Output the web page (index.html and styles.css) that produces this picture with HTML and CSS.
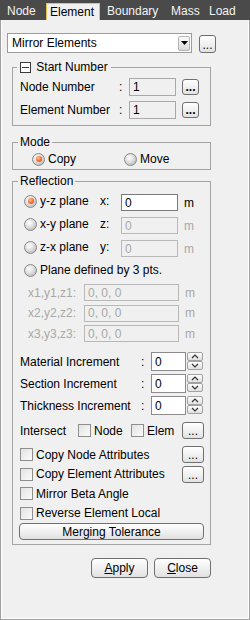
FILE: index.html
```html
<!DOCTYPE html>
<html>
<head>
<meta charset="utf-8">
<link rel="stylesheet" href="styles.css">
</head>
<body>
<div class="tabs">
  <div class="tab tab-node">Node</div>
  <div class="tab tab-element active">Element</div>
  <div class="tab tab-boundary">Boundary</div>
  <div class="tab tab-mass">Mass</div>
  <div class="tab tab-load">Load</div>
</div>
<div class="panel">
  <div class="toprow">
    <div class="combo">
      <span class="combo-text">Mirror Elements</span>
      <span class="combo-btn"><svg width="7" height="4" viewBox="0 0 7 4"><polygon points="0,0 7,0 3.5,4" fill="#000"/></svg></span>
    </div>
    <button class="dots dots-top">...</button>
  </div>

  <fieldset class="grp grp-start">
    <legend class="lg-start"><svg class="minus" width="11" height="11" viewBox="0 0 11 11"><rect x="0.5" y="0.5" width="10" height="10" fill="#fff" stroke="#3a3a3a"/><line x1="2" y1="5.5" x2="9" y2="5.5" stroke="#3a3a3a"/></svg> Start Number</legend>
    <div class="srow">
      <span class="slabel">Node Number</span><span class="colon">:</span>
      <input class="field field-ro" value="1" readonly>
      <button class="dots dots-s">...</button>
    </div>
    <div class="srow">
      <span class="slabel">Element Number</span><span class="colon">:</span>
      <input class="field field-ro" value="1" readonly>
      <button class="dots dots-s">...</button>
    </div>
  </fieldset>

  <fieldset class="grp grp-mode">
    <legend class="lg">Mode</legend>
    <div class="mrow">
      <span class="opt opt-copy"><span class="radio on"></span>Copy</span>
      <span class="opt"><span class="radio"></span>Move</span>
    </div>
  </fieldset>

  <fieldset class="grp grp-refl">
    <legend class="lg">Reflection</legend>
    <div class="prow prow-first">
      <span class="plabel"><span class="radio on"></span><span class="pname">y-z plane</span><span class="axis">x:</span></span>
      <input class="field field-coord" value="0">
      <span class="unit">m</span>
    </div>
    <div class="prow">
      <span class="plabel"><span class="radio"></span><span class="pname">x-y plane</span><span class="axis">z:</span></span>
      <input class="field field-coord field-dis" value="0" disabled>
      <span class="unit unit-dis">m</span>
    </div>
    <div class="prow">
      <span class="plabel"><span class="radio"></span><span class="pname">z-x plane</span><span class="axis">y:</span></span>
      <input class="field field-coord field-dis" value="0" disabled>
      <span class="unit unit-dis">m</span>
    </div>
    <div class="prow prow-3pts">
      <span class="plabel"><span class="radio"></span>Plane defined by 3 pts.</span>
    </div>
    <div class="xrow xrow-first">
      <span class="xlabel">x1,y1,z1:</span>
      <input class="field field-pt field-dis" value="0, 0, 0" disabled>
      <span class="unit unit-dis">m</span>
    </div>
    <div class="xrow">
      <span class="xlabel">x2,y2,z2:</span>
      <input class="field field-pt field-dis" value="0, 0, 0" disabled>
      <span class="unit unit-dis">m</span>
    </div>
    <div class="xrow">
      <span class="xlabel">x3,y3,z3:</span>
      <input class="field field-pt field-dis" value="0, 0, 0" disabled>
      <span class="unit unit-dis">m</span>
    </div>

    <div class="irow irow-first">
      <span class="ilabel">Material Increment</span><span class="colon">:</span>
      <input class="field field-inc" value="0">
      <span class="spin">
        <span class="sbtn"><svg width="8" height="5" viewBox="0 0 8 5"><polyline points="1,4 4,1 7,4" fill="none" stroke="#333" stroke-width="1.2"/></svg></span>
        <span class="sbtn"><svg width="8" height="5" viewBox="0 0 8 5"><polyline points="1,1 4,4 7,1" fill="none" stroke="#333" stroke-width="1.2"/></svg></span>
      </span>
    </div>
    <div class="irow">
      <span class="ilabel">Section Increment</span><span class="colon">:</span>
      <input class="field field-inc" value="0">
      <span class="spin">
        <span class="sbtn"><svg width="8" height="5" viewBox="0 0 8 5"><polyline points="1,4 4,1 7,4" fill="none" stroke="#333" stroke-width="1.2"/></svg></span>
        <span class="sbtn"><svg width="8" height="5" viewBox="0 0 8 5"><polyline points="1,1 4,4 7,1" fill="none" stroke="#333" stroke-width="1.2"/></svg></span>
      </span>
    </div>
    <div class="irow">
      <span class="ilabel">Thickness Increment</span><span class="colon">:</span>
      <input class="field field-inc" value="0">
      <span class="spin">
        <span class="sbtn"><svg width="8" height="5" viewBox="0 0 8 5"><polyline points="1,4 4,1 7,4" fill="none" stroke="#333" stroke-width="1.2"/></svg></span>
        <span class="sbtn"><svg width="8" height="5" viewBox="0 0 8 5"><polyline points="1,1 4,4 7,1" fill="none" stroke="#333" stroke-width="1.2"/></svg></span>
      </span>
    </div>

    <div class="crow crow-intersect">
      <span class="intlabel">Intersect</span>
      <span class="check"></span><span class="intnode">Node</span>
      <span class="check"></span><span>Elem</span>
      <button class="dots dots-w">...</button>
    </div>
    <div class="crow crow-copy">
      <span class="check"></span><span>Copy Node Attributes</span>
      <button class="dots dots-w">...</button>
    </div>
    <div class="crow">
      <span class="check"></span><span>Copy Element Attributes</span>
      <button class="dots dots-w">...</button>
    </div>
    <div class="crow">
      <span class="check"></span><span>Mirror Beta Angle</span>
    </div>
    <div class="crow">
      <span class="check"></span><span>Reverse Element Local</span>
    </div>
    <button class="btn btn-merge">Merging Tolerance</button>
  </fieldset>

  <div class="actions">
    <button class="btn btn-act"><u>A</u>pply</button>
    <button class="btn btn-act"><u>C</u>lose</button>
  </div>
</div>
</body>
</html>
```

FILE: styles.css
```css
* { box-sizing: border-box; }
html, body { margin: 0; padding: 0; }
body {
  width: 250px;
  height: 620px;
  overflow: hidden;
  background: #f0f0f0;
  font-family: "Liberation Sans", Arial, sans-serif;
  font-size: 12px;
  color: #111;
}

/* tabs */
.tabs { display: flex; height: 20px; background: #4a4a4a; }
.tab {
  height: 20px;
  padding: 3px 0 0 7px;
  line-height: 17px;
  color: #f4f4f4;
  white-space: nowrap;
}
.tab-node { width: 46px; }
.tab-element { width: 54px; }
.tab-boundary { width: 64px; }
.tab-mass { width: 38px; }
.tab-load { width: 48px; }
.tab.active {
  margin-top: 3px;
  height: 17px;
  padding: 0 0 0 3px;
  line-height: 16px;
  background: #f0f0f0;
  color: #000;
  border: 1px solid #e8c253;
  border-bottom: 0;
}

/* panel */
.panel {
  height: 600px;
  padding: 13px 0 0 6px;
  border: 1px solid #a0a0a0;
  border-top: 0;
  box-shadow: inset 1px 0 #ffffff, inset -1px -1px #ffffff;
}

.toprow { display: flex; align-items: flex-start; gap: 7px; width: 209px; }
.combo {
  width: 185px;
  height: 20px;
  border: 1px solid #9c9c9c;
  background: #fff;
  display: flex;
  align-items: center;
  padding-left: 4px;
}
.combo-text { color: #000; }
.combo-btn {
  margin-left: auto;
  margin-right: 1px;
  width: 12px;
  height: 15px;
  border: 1px solid #b3b3b3;
  border-radius: 2px;
  background: linear-gradient(#fcfcfc, #d9d9d9);
  display: flex;
  align-items: center;
  justify-content: center;
}

.dots {
  width: 17px;
  height: 17px;
  padding: 0 0 2px 0;
  margin: 0;
  border: 1px solid #6f6f6f;
  border-radius: 3px;
  background: linear-gradient(#ffffff, #e2e2e2);
  font: inherit;
  line-height: 10px;
  color: #000;
  display: flex;
  align-items: flex-end;
  justify-content: center;
  flex: none;
}
.dots-top { margin-top: 2px; height: 18px; }
.dots-s { margin-left: 6px; height: 16px; font-weight: bold; }
.dots-w { margin-left: auto; width: 22px; height: 17px; }

/* group boxes */
.grp {
  margin: 0 5px;
  padding: 0 6px 0 7px;
  width: 199px;
  min-width: 0;
  border: 1px solid #a3a3a3;
}
.grp legend { padding: 0 2px; margin-left: -2px; line-height: 14px; height: 14px; color: #000; }
.grp legend.lg-start { padding: 0 3px; margin-left: -3px; }
.minus { vertical-align: -2px; margin-right: 2px; }

.grp-start { margin-top: 7px; padding-top: 4px; padding-bottom: 6px; }
.grp-mode { margin-top: 9px; padding-top: 3px; padding-bottom: 3px; }
.grp-refl { margin-top: 4px; padding-top: 6px; padding-bottom: 4px; }

.field {
  font: inherit;
  margin: 0;
  padding: 0 3px;
  border: 1px solid #a9a9a9;
  background: #fff;
  color: #000;
  outline: none;
  flex: none;
}
.field-ro { width: 47px; height: 18px; background: #f0f0f0; }
.field-dis { background: #f0f0f0; border-color: #b8b8b8; color: #a8a8a8; -webkit-text-fill-color: #a8a8a8; opacity: 1; }
.field-coord { width: 57px; height: 17px; }
.field-coord:not(.field-dis) { border-color: #7a7a7a; }
.field-pt { width: 95px; height: 17px; }
.field-inc { width: 35px; height: 19px; border-color: #8c8c8c; }

/* start number rows */
.srow { display: flex; align-items: center; height: 18px; }
.srow + .srow { margin-top: 5px; }
.slabel { width: 99px; color: #000; }
.colon { width: 10px; color: #000; }

/* mode */
.mrow { display: flex; align-items: center; height: 14px; padding-left: 12px; color: #000; }
.opt { display: flex; align-items: center; }
.opt-copy { width: 92px; }

.radio {
  width: 13px;
  height: 13px;
  margin-right: 3px;
  border-radius: 50%;
  border: 1px solid #8a8a8a;
  background: radial-gradient(circle at 40% 35%, #ffffff 0, #e2e2e2 40%, #a9a9a9 100%);
  display: flex;
  align-items: center;
  justify-content: center;
  flex: none;
}
.radio.on::after {
  content: "";
  width: 6px;
  height: 6px;
  border-radius: 50%;
  background: radial-gradient(circle at 40% 35%, #ffc39a 0, #f26a2a 55%, #cc4410 100%);
}

/* reflection */
.prow { display: flex; align-items: flex-start; height: 17px; margin-top: 6px; padding-left: 4px; color: #000; }
.prow-first { margin-top: 0; }
.prow-3pts { height: 14px; }
.plabel { display: flex; align-items: center; width: 97px; height: 14px; line-height: 14px; white-space: nowrap; flex: none; }
.prow-3pts .plabel { width: auto; }
.pname { width: 60px; flex: none; }
.unit { margin-left: 6px; margin-top: 2px; line-height: 14px; color: #000; }
.unit-dis { color: #a8a8a8; }

.xrow { display: flex; align-items: center; height: 17px; margin-top: 3.5px; padding-left: 8px; }
.xrow-first { margin-top: 7px; }
.xlabel { width: 56px; color: #a8a8a8; flex: none; }
.xrow .unit { margin-top: 0; }

.irow { display: flex; align-items: center; height: 19px; margin-top: 3px; color: #000; }
.irow-first { margin-top: 10px; }
.ilabel { width: 121px; flex: none; }
.spin { display: flex; flex-direction: column; width: 16px; height: 18px; margin-left: 1px; align-self: flex-start; }
.sbtn {
  height: 9px;
  border: 1px solid #a2a2a2;
  border-radius: 2px;
  background: linear-gradient(#fdfdfd, #e0e0e0);
  display: flex;
  align-items: center;
  justify-content: center;
}

.crow { display: flex; align-items: center; height: 17px; margin-top: 2.5px; color: #000; white-space: nowrap; }
.crow-intersect { margin-top: 7px; }
.crow-copy { margin-top: 7px; }
.intlabel { width: 58px; flex: none; }
.intnode { width: 37px; flex: none; }
.check {
  width: 13px;
  height: 13px;
  margin-right: 3px;
  border: 1px solid #8e8e8e;
  background: linear-gradient(135deg, #e2e2e2, #fbfbfb);
  flex: none;
}

.btn {
  font: inherit;
  color: #000;
  margin: 0;
  padding: 0;
  border: 1px solid #707070;
  border-radius: 4px;
  background: linear-gradient(#ffffff, #e1e1e1);
}
.btn-merge { display: block; width: 185px; height: 17px; margin-top: 1.5px; margin-left: -1px; line-height: 14px; }

.actions { display: flex; justify-content: flex-end; gap: 6px; width: 209px; padding-right: 5px; margin-top: 13px; }
.btn-act { width: 57px; height: 20px; }
```
